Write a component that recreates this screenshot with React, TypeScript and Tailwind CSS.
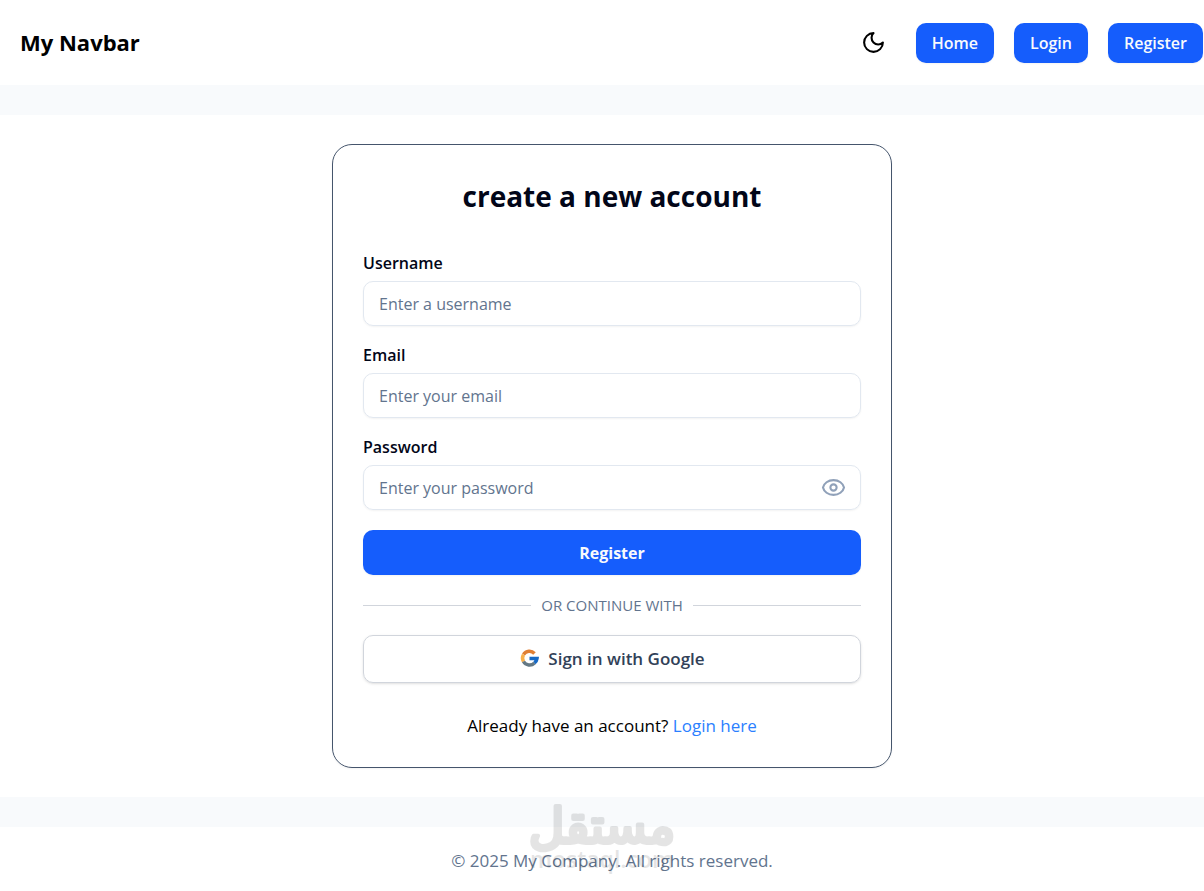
import { useState } from 'react';

const navLinks = ['Home', 'Login', 'Register'];

const fields = [
  { id: 'username', label: 'Username', type: 'text', placeholder: 'Enter a username' },
  { id: 'email', label: 'Email', type: 'email', placeholder: 'Enter your email' },
  { id: 'password', label: 'Password', type: 'password', placeholder: 'Enter your password' },
];

function MoonIcon() {
  return (
    <svg className="size-[25px]" viewBox="0 0 24 24" fill="none" stroke="currentColor" strokeWidth="2" strokeLinecap="round" strokeLinejoin="round">
      <path d="M12 3a6 6 0 0 0 9 9 9 9 0 1 1-9-9Z" />
    </svg>
  );
}

function EyeIcon() {
  return (
    <svg className="size-[25px]" viewBox="0 0 24 24" fill="none" stroke="currentColor" strokeWidth="2" strokeLinecap="round" strokeLinejoin="round">
      <path d="M1.900 12C2.800 8 6.800 4.900 12 4.900S21.200 8 22.100 12C21.200 16 17.200 19.100 12 19.100S2.800 16 1.900 12Z" />
      <circle cx="12" cy="12" r="3" />
    </svg>
  );
}

function GoogleIcon() {
  return (
    <svg className="size-5" viewBox="0 0 20 20" fill="none" strokeWidth="3.5">
      <path d="M4.500 5.500A7 7 0 0 1 15.500 4.500" stroke="#e07f33" />
      <path d="M4.500 12.500A7 7 0 0 1 4.500 5.500" stroke="#f8b04c" />
      <path d="M15.500 14A7 7 0 0 1 4.500 12.500" stroke="#647884" />
      <path d="M10.500 9.500h7.500a7 7 0 0 1-2.500 4.500" stroke="#1669c5" />
    </svg>
  );
}

function Navbar() {
  return (
    <header className="flex h-[85px] items-center justify-between pl-5 pr-px">
      <div className="text-[22px] font-bold text-black">My Navbar</div>
      <nav className="flex items-center gap-5">
        <button type="button" aria-label="Toggle theme" className="mr-[10px] text-black">
          <MoonIcon />
        </button>
        {navLinks.map((name) => (
          <a key={name} href="#" className="flex h-10 items-center rounded-[10px] bg-[#155dfc] px-4 text-[16px] font-semibold text-slate-50 shadow-xs">
            {name}
          </a>
        ))}
      </nav>
    </header>
  );
}

function RegisterForm() {
  const [visible, setVisible] = useState(false);

  return (
    <form className="flex flex-col gap-5">
      {fields.map((field) => (
        <div key={field.id}>
          <label htmlFor={field.id} className="mb-[9px] block text-[16px] leading-[18px] font-semibold text-[#020618]">
            {field.label}
          </label>
          <div className="relative">
            <input
              id={field.id}
              type={field.type === 'password' && visible ? 'text' : field.type}
              placeholder={field.placeholder}
              className="h-[45px] w-full rounded-[10px] border border-slate-200 px-[15px] text-[16px] shadow-xs placeholder:text-slate-500"
            />
            {field.type === 'password' && (
              <button
                type="button"
                aria-label="Show password"
                onClick={() => setVisible(!visible)}
                className="absolute inset-y-0 right-[15px] text-slate-400"
              >
                <EyeIcon />
              </button>
            )}
          </div>
        </div>
      ))}
      <button type="submit" className="h-[45px] rounded-[10px] bg-[#155dfc] text-[16px] font-bold text-slate-50 shadow-xs">
        Register
      </button>
    </form>
  );
}

function Watermark() {
  return (
    <svg className="pointer-events-none absolute -top-7 left-1/2 h-20 w-40 -translate-x-1/2 overflow-visible" viewBox="0 0 160 80" opacity="0.1" aria-hidden="true">
      <text x="80" y="44" textAnchor="middle" fontSize="49" stroke="#000" strokeWidth="4" strokeLinejoin="round" className="font-['DejaVu_Sans',sans-serif]">
        مستقل
      </text>
      <text x="80" y="69" textAnchor="middle" fontSize="23" fontWeight="600" className="font-['Open_Sans',sans-serif]">
        mostaql.com
      </text>
    </svg>
  );
}

export default function App() {
  return (
    <div className="min-h-screen overflow-x-hidden bg-white font-['Open_Sans','Noto_Sans',sans-serif]">
      <Navbar />
      <div className="h-[30px] bg-slate-50" />
      <main className="py-[29px] pl-5">
        <section className="mx-auto w-full max-w-[560px] rounded-[20px] border border-slate-600 px-[30px] py-[29px] shadow-xs">
          <h1 className="mb-[35px] text-center text-[28px] leading-[45px] font-bold text-[#020618]">create a new account</h1>
          <RegisterForm />
          <div className="my-5 flex items-center gap-[10px] text-[15px] leading-5 text-slate-500">
            <span className="h-px flex-1 bg-gray-300" />
            OR CONTINUE WITH
            <span className="h-px flex-1 bg-gray-300" />
          </div>
          <button type="button" className="flex h-12 w-full items-center justify-center gap-[9px] rounded-[10px] border border-gray-300 text-[17px] font-semibold text-slate-700 shadow-sm">
            <GoogleIcon />
            Sign in with Google
          </button>
          <p className="mt-[30px] text-center text-[17px] leading-[25px] text-black">
            Already have an account? <a href="#" className="text-[#2b7fff]">Login here</a>
          </p>
        </section>
      </main>
      <div className="h-[30px] bg-slate-50" />
      <footer className="relative flex h-16 items-center justify-center pt-1 pl-5 text-[17px] text-slate-500">
        © 2025 My Company. All rights reserved.
        <Watermark />
      </footer>
    </div>
  );
}
